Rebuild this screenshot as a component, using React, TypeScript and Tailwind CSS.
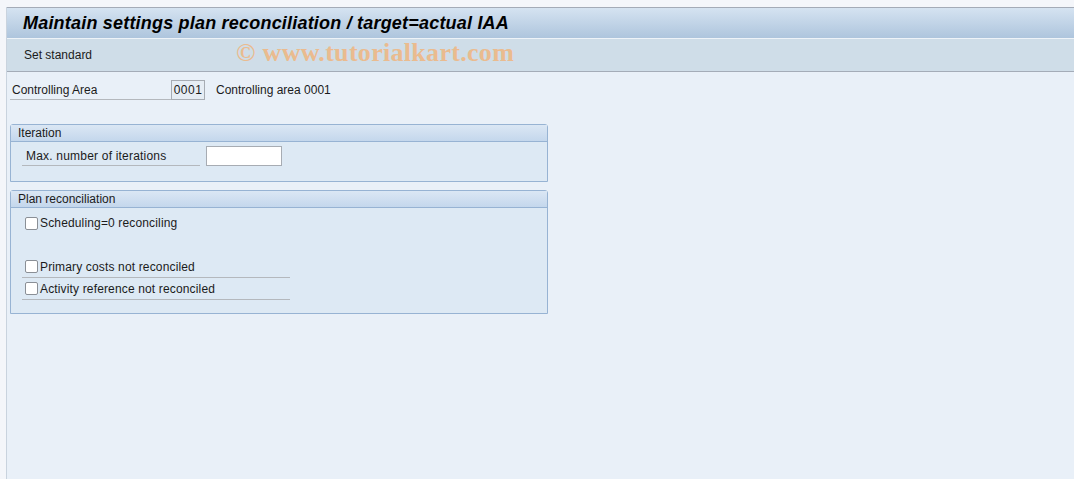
import React from "react";

const font = { fontFamily: '"Liberation Sans", Arial, sans-serif' };

function Group({ title, children, bodyClass }: { title: string; children: React.ReactNode; bodyClass: string }) {
  return (
    <div className="w-[538px] rounded-t-[3px] border border-[#97b3d3] bg-[#dde9f4]">
      <div className="flex h-[17px] items-center border-b border-[#97b3d3] bg-gradient-to-b from-[#dbe7f4] to-[#c4d7ec] pl-[7px] text-[12px] text-[#1b1b1b]">
        {title}
      </div>
      <div className={bodyClass}>{children}</div>
    </div>
  );
}

function Check({ label, underline = false }: { label: string; underline?: boolean }) {
  return (
    <div className={`flex h-[22px] w-[268px] items-center pl-[3px] ${underline ? "border-b border-[#b4b8bd]" : ""}`}>
      <span className="h-[13px] w-[13px] rounded-[2px] border border-[#8a8f96] bg-white" />
      <span className="ml-[2px] text-[12px] tracking-[0.15px] text-[#1b1b1b]">{label}</span>
    </div>
  );
}

export default function App() {
  return (
    <div className="h-[479px] w-[1074px] overflow-hidden bg-[#f4f6fa]" style={font}>
      <div className="h-[7px]" />
      <div className="ml-[6px] flex h-[472px] flex-col border-l border-[#c9d3de] bg-[#e9f0f8]">
        <div className="flex h-[31px] items-center border-t border-[#a4abb7] bg-gradient-to-b from-[#d5e3f1] to-[#aec5dd] pl-[16px]">
          <h1 className="text-[18px] font-bold italic tracking-[0.2px] text-black">
            Maintain settings plan reconciliation / target=actual IAA
          </h1>
        </div>
        <div className="flex h-[34px] items-center border-t border-[#eef3f8] border-b border-b-[#a4acb8] bg-[#cfdde8] pl-[17px] text-[12px] text-[#1b1b1b]">
          <span>Set standard</span>
          <span
            className="-mt-[5px] ml-[144px] text-[26px] font-bold tracking-[0.3px] text-[#eabb8f]"
            style={{ fontFamily: '"Liberation Serif", "Times New Roman", serif' }}
          >
            © www.tutorialkart.com
          </span>
        </div>

        <div className="mt-[8px] flex h-[20px] items-center pl-[3px]">
          <div className="flex h-[19px] w-[161px] items-center border-b border-[#b4b8bd] pl-[2px] text-[12px] text-[#1b1b1b]">
            Controlling Area
          </div>
          <div className="flex h-[20px] w-[34px] items-center justify-center border border-[#a7acb3] bg-[#e6edf4] text-[12px] tracking-[0.5px] text-[#1b1b1b]">
            0001
          </div>
          <span className="ml-[11px] text-[12px] text-[#1b1b1b]">Controlling area 0001</span>
        </div>

        <div className="ml-[3px] mt-[24px]">
          <Group title="Iteration" bodyClass="h-[39px] pl-[11px] pt-[4px]">
            <div className="flex items-center">
              <div className="flex h-[20px] w-[178px] items-center border-b border-[#b4b8bd] pl-[4px] text-[12px] tracking-[0.2px] text-[#1b1b1b]">
                Max. number of iterations
              </div>
              <div className="ml-[6px] h-[20px] w-[76px] border border-[#a7acb3] bg-white" />
            </div>
          </Group>
        </div>

        <div className="ml-[3px] mt-[8px]">
          <Group title="Plan reconciliation" bodyClass="h-[105px] pl-[11px] pt-[4px]">
            <Check label="Scheduling=0 reconciling" />
            <div className="h-[22px]" />
            <Check label="Primary costs not reconciled" underline />
            <Check label="Activity reference not reconciled" underline />
          </Group>
        </div>
      </div>
    </div>
  );
}
